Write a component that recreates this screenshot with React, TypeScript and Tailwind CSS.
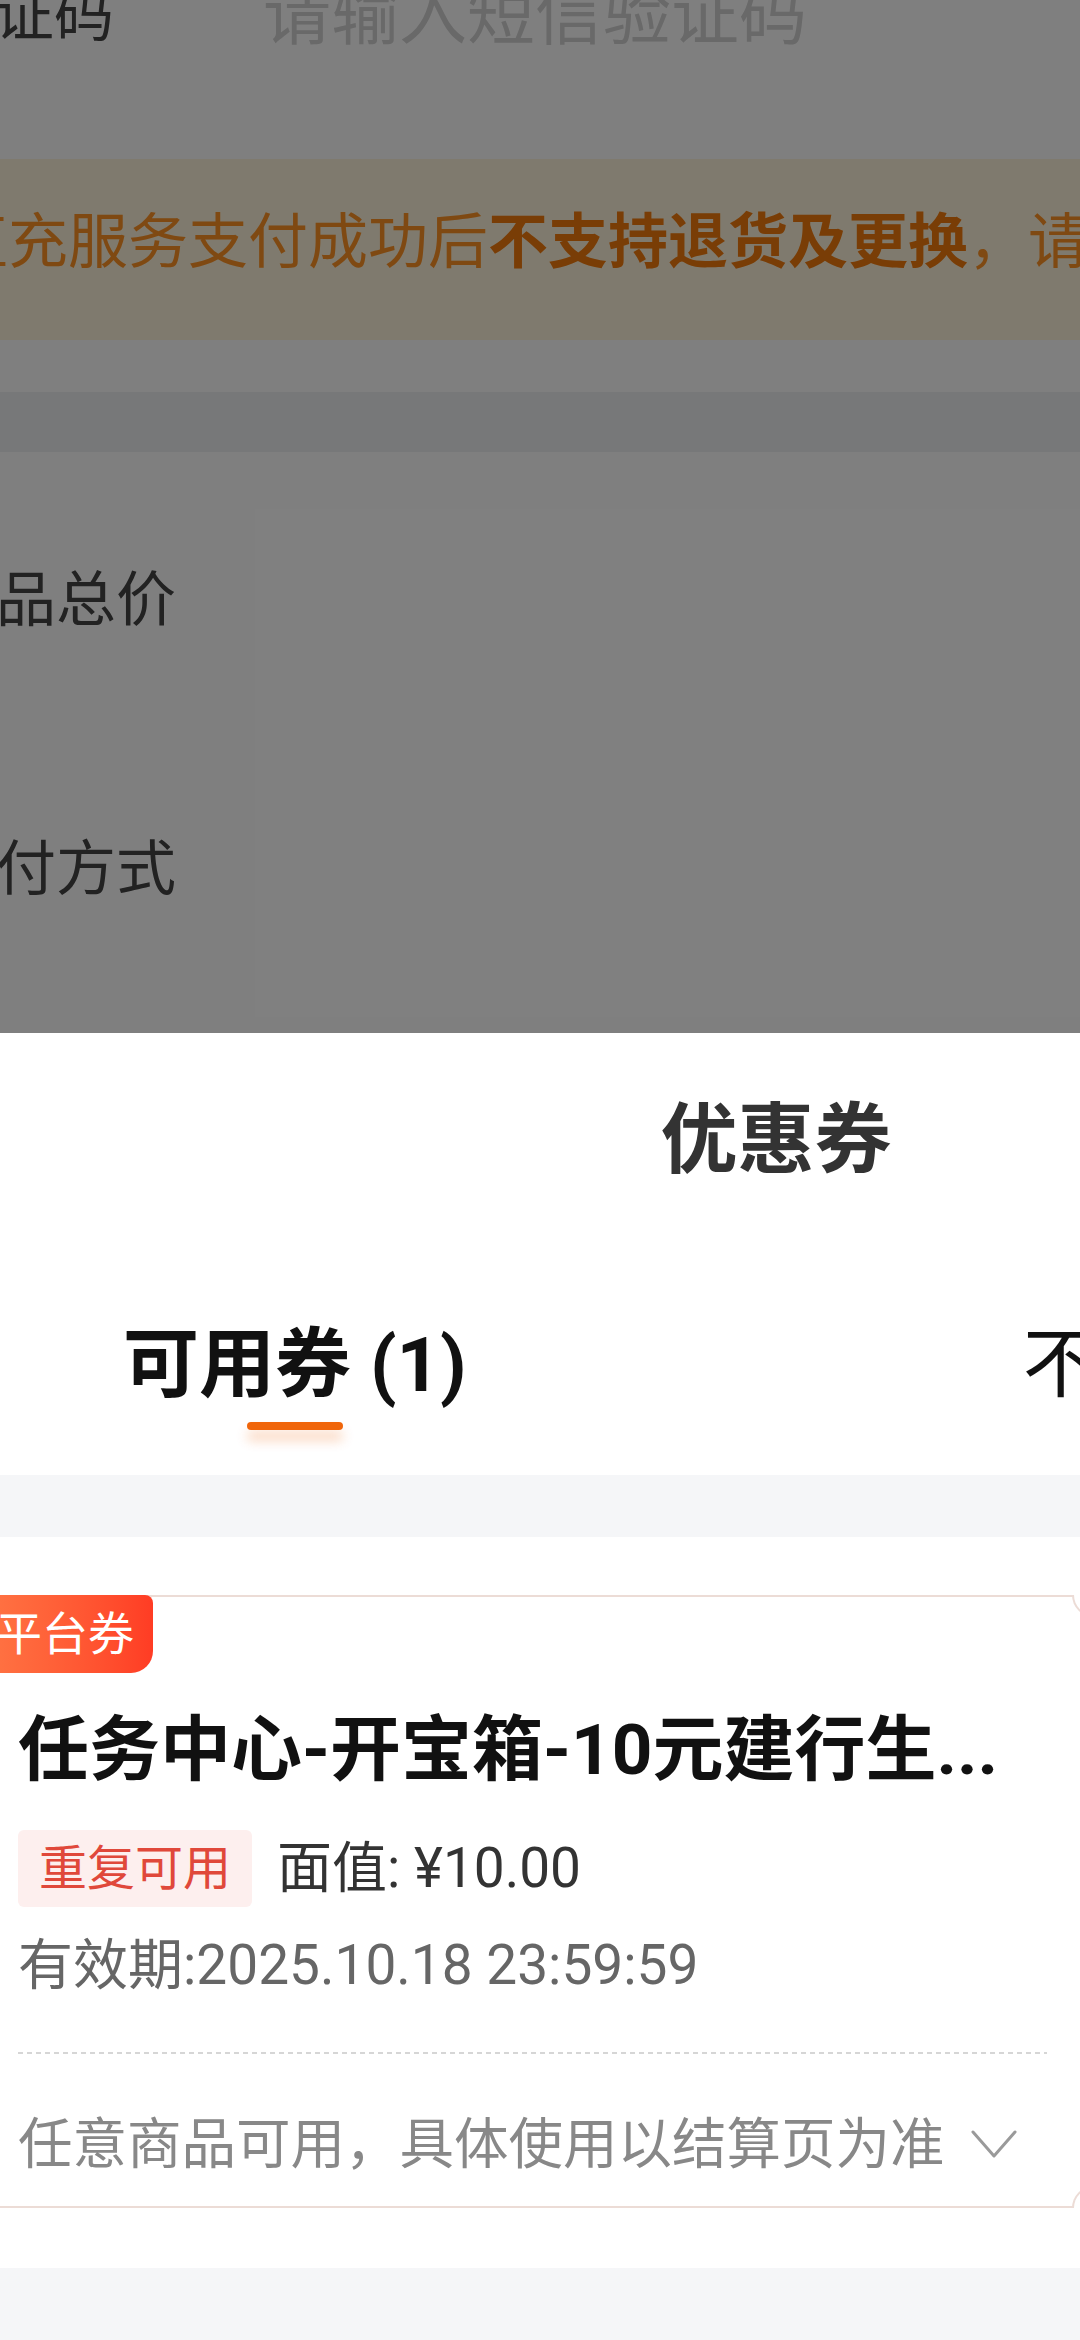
import React from "react";

export default function App() {
  return (
    <div className="w-[1080px] h-[2340px] overflow-hidden bg-[#f5f6f8] font-['Roboto','Noto_Sans_CJK_SC',sans-serif]">
      {/* dimmed page behind the sheet */}
      <div className="relative h-[1033px] overflow-hidden bg-white">
        <div className="flex h-[32px] items-center whitespace-nowrap">
          <div className="ml-[-66px] w-[329px] shrink-0 text-[60px] leading-none text-[#444]">验证码</div>
          <div className="shrink-0 text-[68px] leading-none text-[#d2d2d2]">请输入短信验证码</div>
        </div>
        <div className="mt-[127px] flex h-[181px] items-center bg-[#fff5dc] pb-[13px]">
          <div className="ml-[-52px] shrink-0 whitespace-nowrap text-[60px] leading-none text-[#ff9225]">
            直充服务支付成功后<span className="font-bold text-[#f37a0c]">不支持退货及更换</span>，请仔细核对充值信息
          </div>
        </div>
        <div className="mt-[52px] h-[60px] bg-[#eff0f3]" />
        <div className="ml-[-64px] mt-[119px] whitespace-nowrap text-[60px] leading-none text-[#444]">商品总价</div>
        <div className="ml-[-64px] mt-[209px] whitespace-nowrap text-[60px] leading-none text-[#444]">支付方式</div>
        <div className="absolute inset-0 bg-black/50" />
      </div>

      {/* bottom sheet */}
      <div className="bg-white">
        <div className="flex h-[216px] items-center justify-center pl-[472px]">
          <div className="text-[77px] font-bold leading-none text-[#333]">优惠券</div>
        </div>
        <div className="flex h-[226px] items-start whitespace-nowrap pt-[78px]">
          <div className="ml-[123px] flex shrink-0 flex-col items-center">
            <div className="text-[76px] font-bold leading-none text-[#111]">可用券 (1)</div>
            <div className="mt-[19px] h-[8px] w-[96px] rounded-full bg-[#f0650a] shadow-[0_10px_12px_rgba(240,101,10,0.3)]" />
          </div>
          <div className="ml-[556px] shrink-0 text-[76px] leading-none text-[#111]">不可用券 (0)</div>
        </div>
      </div>
      <div className="h-[62px] bg-[#f5f6f8]" />
      <div className="bg-white pb-[60px] pt-[58px]">
        <div className="relative -ml-[40px] w-[1160px] border-y-2 border-[#ecdcd6] bg-white pb-[34px]">
          <div className="-mt-[2px] flex h-[78px] w-[193px] items-center justify-end rounded-tr-[8px] rounded-br-[22px] bg-linear-to-r from-[#ff7b48] to-[#ff3c24] pr-[19px] text-[46px] leading-none text-white">
            平台券
          </div>
          <div className="pl-[58px]">
            <div className="mt-[41px] whitespace-nowrap text-[71px] font-bold leading-none text-[#111]">
              任务中心-开宝箱-10元建行生...
            </div>
            <div className="mt-[45px] flex items-center whitespace-nowrap">
              <div className="flex h-[77px] items-center rounded-[6px] bg-[#fdefee] px-[21px] text-[48px] leading-none text-[#e0483a]">
                重复可用
              </div>
              <div className="ml-[25px] text-[55px] leading-none text-[#333]">面值: ¥10.00</div>
            </div>
            <div className="mt-[31px] whitespace-nowrap text-[55px] leading-none text-[#666]">有效期:2025.10.18 23:59:59</div>
            <div className="mt-[59px] h-[2px] w-[1029px] bg-[repeating-linear-gradient(90deg,#d6d6d6_0_5px,transparent_5px_9px)]" />
            <div className="mt-[63px] flex w-[999px] items-center justify-between whitespace-nowrap">
              <div className="text-[54.5px] leading-none text-[#888]">任意商品可用，具体使用以结算页为准</div>
              <svg width="46" height="30" viewBox="0 0 46 30" fill="none">
                <polyline points="2,3 23,27 44,3" stroke="#9a9a9a" strokeWidth="3" strokeLinecap="round" strokeLinejoin="round" />
              </svg>
            </div>
          </div>
          <div className="absolute left-[1112px] top-[-2px] h-[22px] w-[44px] rounded-b-full border-2 border-t-0 border-[#ecdcd6] bg-white" />
          <div className="absolute bottom-[-2px] left-[1112px] h-[22px] w-[44px] rounded-t-full border-2 border-b-0 border-[#ecdcd6] bg-white" />
        </div>
      </div>
    </div>
  );
}
